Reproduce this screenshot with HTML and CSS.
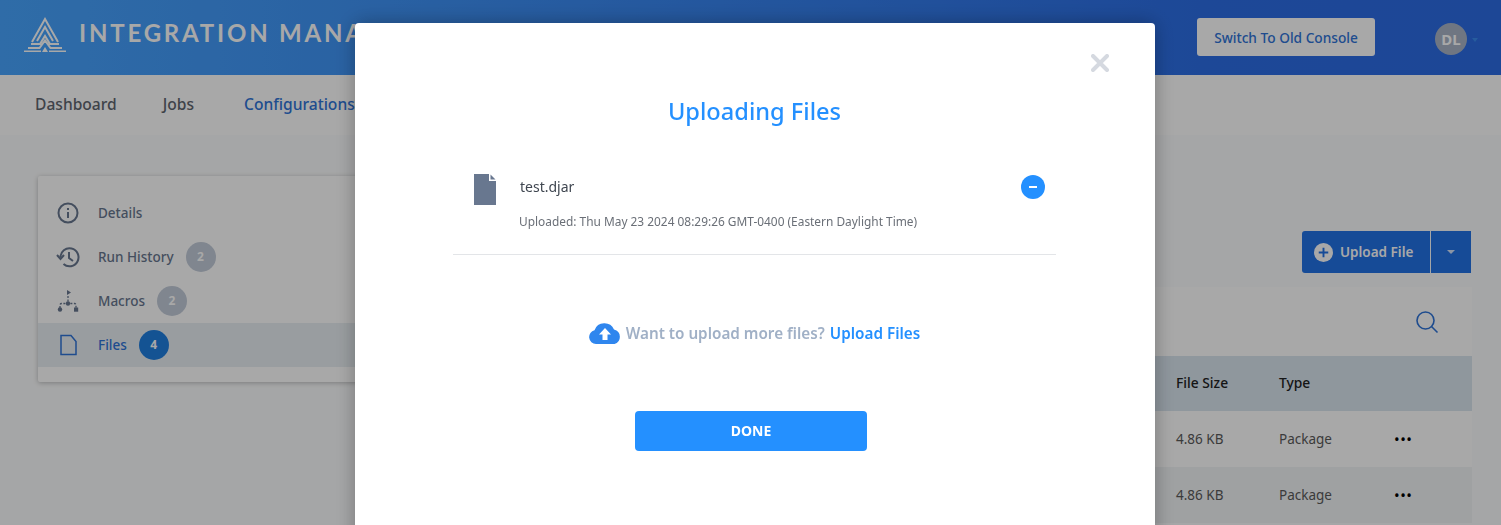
FILE: index.html
```html
<!DOCTYPE html>
<html lang="en">
<head>
    <meta charset="UTF-8">
    <title>Integration Manager</title>
    <link rel="stylesheet" href="styles.css">
</head>
<body>
    <header class="top-bar">
        <svg class="logo" viewBox="0 0 42 36" width="42" height="36" fill="none" stroke="#fff" stroke-width="2">
            <path d="M8 26 21 3l13 23M13 25 21 11l8 14" />
            <path d="M7 28h9l5-8 5 8h9M4 32h11.500L21 24.500 26.500 32H38M0 35.500h17M25 35.500h17" />
            <path d="M18 36h6l-3-5z" fill="#fff" stroke="none" />
        </svg>
        <span class="app-title">INTEGRATION MANAGER</span>
        <button class="old-console">Switch To Old Console</button>
        <div class="avatar">DL</div>
        <span class="avatar-caret"></span>
    </header>

    <nav class="main-nav">
        <a href="#">Dashboard</a>
        <a href="#">Jobs</a>
        <a href="#" class="active">Configurations</a>
    </nav>

    <div class="content">
        <aside class="side-menu">
            <div class="side-item">
                <svg viewBox="0 0 24 24" width="24" height="24" fill="none" stroke="#68778f" stroke-width="2">
                    <circle cx="12" cy="12" r="9.500" />
                    <path d="M12 11v6M12 7v2" />
                </svg>
                <span>Details</span>
            </div>
            <div class="side-item">
                <svg viewBox="0 0 24 24" width="24" height="24" fill="none" stroke="#68778f" stroke-width="2">
                    <path d="M4.500 12.500a9 9 0 1 1 3 6.500" />
                    <path d="M1 10l3.500 4L8 10" />
                    <path d="M13 7v6l4 3" />
                </svg>
                <span>Run History</span>
                <b class="count">2</b>
            </div>
            <div class="side-item">
                <svg viewBox="0 0 24 24" width="24" height="24" fill="#68778f" stroke="#68778f" stroke-width="1.300">
                    <path d="M11 1v5l4-2.500z" stroke="none" />
                    <path d="M12 7v9M4 19v-3a1.500 1.500 0 0 1 1.500-1.500h13A1.500 1.500 0 0 1 20 16v3" fill="none" stroke-dasharray="2 1.500" />
                    <circle cx="12" cy="14.500" r="2.200" stroke="none" />
                    <circle cx="4" cy="20.500" r="2.200" stroke="none" />
                    <rect x="18" y="18.500" width="4.200" height="4.200" stroke="none" />
                </svg>
                <span>Macros</span>
                <b class="count">2</b>
            </div>
            <div class="side-item selected">
                <svg viewBox="0 0 24 24" width="24" height="24" fill="none" stroke="#2f74d8" stroke-width="1.500">
                    <path d="M5 2.500h10l5 6v13H5z" />
                </svg>
                <span>Files</span>
                <b class="count">4</b>
            </div>
        </aside>

        <main class="files">
            <div class="upload-split">
                <button class="upload-btn">
                    <svg viewBox="0 0 20 20" width="19" height="19">
                        <circle cx="10" cy="10" r="10" fill="#fff" />
                        <path d="M10 5v10M5 10h10" stroke="#2272e6" stroke-width="2" />
                    </svg>
                    Upload File
                </button>
                <button class="upload-more"><span class="caret"></span></button>
            </div>
            <div class="panel">
                <div class="panel-tools">
                    <svg viewBox="0 0 24 24" width="24" height="24" fill="none" stroke="#2f74d8" stroke-width="1.600">
                        <circle cx="10.500" cy="10.500" r="8.500" />
                        <path d="m16.500 16.500 6 6" />
                    </svg>
                </div>
                <div class="file-row head">
                    <span></span><span>File Size</span><span>Type</span><span></span>
                </div>
                <div class="file-row">
                    <span></span><span>4.86 KB</span><span>Package</span><span class="dots">&bull;&bull;&bull;</span>
                </div>
                <div class="file-row alt">
                    <span></span><span>4.86 KB</span><span>Package</span><span class="dots">&bull;&bull;&bull;</span>
                </div>
            </div>
        </main>
    </div>

    <div class="overlay">
        <div class="modal">
            <svg class="modal-close" viewBox="0 0 18 18" width="18" height="18" stroke="#d5d9e0" stroke-width="4" stroke-linecap="round">
                <path d="M2 2l14 14M16 2 2 16" />
            </svg>
            <h2>Uploading Files</h2>
            <div class="upload-row">
                <div class="upload-name">
                    <svg class="doc-icon" viewBox="0 0 22 31" width="22" height="31">
                        <path d="M0 0h15v7h7v24H0z" fill="#68778f" />
                        <path d="M16.500 0.500 21.500 5.500h-5z" fill="#68778f" />
                    </svg>
                    <span>test.djar</span>
                    <button class="remove-btn"></button>
                </div>
                <p class="upload-date">Uploaded: Thu May 23 2024 08:29:26 GMT-0400 (Eastern Daylight Time)</p>
            </div>
            <p class="more-files">
                <svg viewBox="0 0 32 22" width="32" height="22">
                    <path d="M7 22a7 7 0 0 1-1.500-13.800A10.500 10.500 0 0 1 25 7.500 7.500 7.500 0 0 1 25.500 22z" fill="#2f86ee" />
                    <path d="M16 6l6 6.500h-3.500V18h-5v-5.500H10z" fill="#fff" />
                </svg>
                Want to upload more files? <a href="#">Upload Files</a>
            </p>
            <button class="done-btn">DONE</button>
        </div>
    </div>
</body>
</html>
```

FILE: styles.css
```css
html, body {
    height: 100%;
}
body {
    margin: 0;
    height: 525px;
    overflow: hidden;
    font-family: "Noto Sans", Arial, sans-serif;
    background-color: #fbfcfd;
    color: #4a4f57;
}
button {
    font-family: inherit;
    border: none;
}

.top-bar {
    height: 75px;
    display: flex;
    align-items: center;
    padding: 0 23px 0 24px;
    background: linear-gradient(90deg, #48a5ff 0%, #2c6ee6 80%, #2c6ce4 100%);
    box-sizing: border-box;
}
.logo {
    margin-top: -7px;
}
.app-title {
    margin: -11px 0 0 13px;
    font-family: Lato, sans-serif;
    font-size: 24px;
    font-weight: 700;
    letter-spacing: 2.8px;
    color: #fff;
    white-space: nowrap;
}
.old-console {
    margin: -1px 0 0 auto;
    width: 178px;
    height: 38px;
    border-radius: 3px;
    background-color: #fff;
    color: #2f74d8;
    font-size: 13.700px;
    font-weight: 500;
}
.avatar {
    width: 32px;
    height: 32px;
    margin: 2px 0 0 60px;
    border-radius: 50%;
    background-color: #a9b4c6;
    color: #fff;
    font-size: 15px;
    font-weight: 700;
    line-height: 32px;
    text-align: center;
}
.avatar-caret {
    margin: 4px 0 0 5px;
    border: 3.500px solid transparent;
    border-top: 4px solid #3c8cf0;
    border-bottom: none;
}

.main-nav {
    height: 60px;
    display: flex;
    align-items: center;
    gap: 46px;
    padding: 0 35px 3px;
    background-color: #fff;
    box-sizing: border-box;
}
.main-nav a {
    font-size: 15.600px;
    font-weight: 500;
    text-decoration: none;
    color: #5f6670;
}
.main-nav a.active {
    margin-left: 4px;
    color: #2f74d8;
}

.content {
    display: flex;
    padding: 41px 29px 0 38px;
}
.side-menu {
    width: 360px;
    height: 206px;
    padding-top: 15px;
    box-sizing: border-box;
    background-color: #fff;
    border-radius: 2px;
    box-shadow: 0 1px 5px rgba(0,0,0,0.25);
    flex-shrink: 0;
}
.side-item {
    height: 44px;
    display: flex;
    align-items: center;
    padding-left: 18px;
    font-size: 13.500px;
    font-weight: 500;
    color: #68778f;
}
.side-item svg {
    margin-right: 18px;
}
.side-item.selected {
    background-color: #e9eff3;
    color: #2f74d8;
}
.count {
    width: 30px;
    height: 30px;
    margin-left: 12px;
    border-radius: 50%;
    background-color: #c3ccd9;
    color: #fff;
    font-size: 12px;
    line-height: 30px;
    text-align: center;
}
.selected .count {
    background-color: #1f7ee0;
}

.files {
    flex: 1;
    padding-top: 55px;
}
.upload-split {
    display: flex;
    justify-content: flex-end;
    gap: 1px;
    margin-right: 1px;
}
.upload-btn, .upload-more {
    height: 42px;
    background-color: #2272e6;
    color: #fff;
    font-size: 13.500px;
    font-weight: 600;
}
.upload-btn {
    width: 128px;
    display: flex;
    align-items: center;
    gap: 7px;
    padding: 0 0 0 12px;
    border-radius: 3px 0 0 3px;
}
.upload-more {
    width: 40px;
    display: flex;
    align-items: center;
    justify-content: center;
}
.caret {
    border: 4px solid transparent;
    border-top: 4px solid #d5e4fb;
    border-bottom: none;
}
.panel {
    margin-top: 14px;
    background-color: #fff;
}
.panel-tools {
    height: 69px;
    display: flex;
    align-items: center;
    justify-content: flex-end;
    padding: 0 33px 0 0;
}
.file-row {
    height: 56px;
    display: grid;
    grid-template-columns: 1fr 103px 115px 78px;
    align-items: center;
    font-size: 13.500px;
    color: #5a5a5a;
}
.file-row.head {
    height: 55px;
    padding-bottom: 2px;
    box-sizing: border-box;
    background-color: #d9e5ef;
    font-size: 13.800px;
    font-weight: 500;
    color: #222;
}
.file-row.alt {
    background-color: #f1f4f6;
}
.dots {
    color: #000;
    font-size: 15px;
    letter-spacing: 0.5px;
}

.overlay {
    position: fixed;
    top: 0;
    left: 0;
    right: 0;
    bottom: 0;
    background-color: rgba(0,0,0,0.34);
}
.modal {
    position: relative;
    width: 800px;
    height: 560px;
    margin: 23px 0 0 355px;
    padding: 71px 99px 0 98px;
    box-sizing: border-box;
    background-color: #fff;
    border-radius: 4px;
    box-shadow: 0 0 20px rgba(0,0,0,0.3);
}
.modal-close {
    position: absolute;
    top: 31px;
    right: 46px;
}
.modal h2 {
    margin: 0;
    font-size: 23.600px;
    font-weight: 500;
    line-height: 34px;
    text-align: center;
    color: #2490ff;
}
.upload-row {
    height: 85px;
    margin-top: 41px;
    border-bottom: 1px solid #e3e5e8;
}
.upload-name {
    height: 35px;
    display: flex;
    align-items: center;
    padding: 0 11px 0 21px;
    font-size: 14px;
    color: #3f4650;
}
.doc-icon {
    margin: 6px 24px 0 0;
}
.remove-btn {
    position: relative;
    width: 24px;
    height: 24px;
    margin-left: auto;
    padding: 0;
    border-radius: 50%;
    background-color: #2490ff;
}
.remove-btn::after {
    content: "";
    position: absolute;
    left: 8px;
    top: 11px;
    width: 8px;
    height: 2px;
    background-color: #fff;
}
.upload-date {
    margin: 9px 0 0 66px;
    font-size: 11.900px;
    color: #6a6f77;
    white-space: nowrap;
}
.more-files {
    display: flex;
    align-items: center;
    justify-content: center;
    gap: 5px;
    margin: 67px 0 0;
    font-size: 15.250px;
    font-weight: 600;
    color: #a0b0c6;
}
.more-files a {
    color: #2490ff;
    text-decoration: none;
}
.done-btn {
    display: block;
    width: 232px;
    height: 40px;
    margin: 67px 0 0 182px;
    padding: 0 0 2px;
    border-radius: 4px;
    background-color: #2490ff;
    color: #fff;
    font-size: 14px;
    font-weight: 700;
}
```
